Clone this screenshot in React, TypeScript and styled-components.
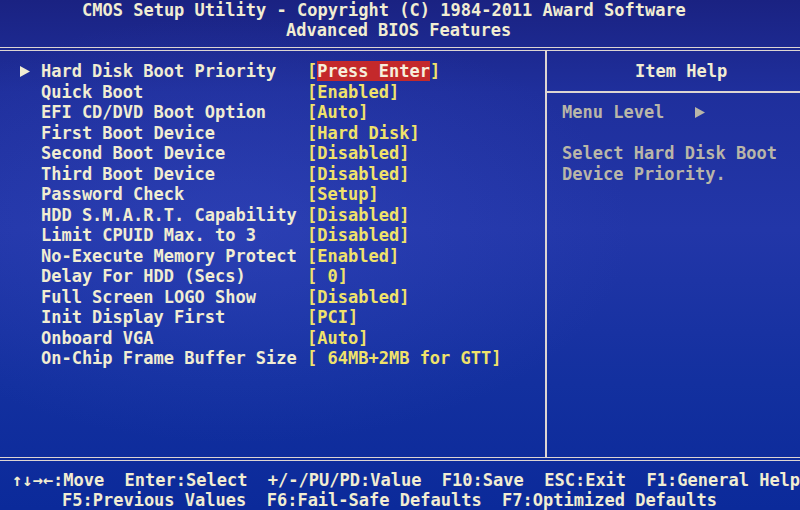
import React from "react";
import styled, { createGlobalStyle } from "styled-components";

const Global = createGlobalStyle`
  html, body { margin: 0; padding: 0; }
  body { width: 800px; height: 510px; overflow: hidden; background: #152896; }
`;

const Screen = styled.div`
  width: 800px;
  height: 510px;
  display: flex;
  flex-direction: column;
  overflow: hidden;
  background:
    radial-gradient(ellipse 70% 60% at 30% 45%, rgba(60, 80, 200, 0.35), rgba(60, 80, 200, 0) 70%),
    linear-gradient(180deg, #1a2282 0%, #1f2f9c 18%, #2236a8 45%, #13309f 75%, #0b2a9a 100%);
  font-family: "DejaVu Sans Mono", "Liberation Mono", monospace;
  font-size: 17px;
  font-weight: bold;
  line-height: 20.5px;
  color: #f1edd2;
  white-space: pre;
`;

const Header = styled.header`
  height: 47px;
  display: flex;
  flex-direction: column;
`;

const HeaderLine = styled.div<{ $indent: number }>`
  padding-left: ${(p) => p.$indent}px;
  line-height: 20px;
`;

const DoubleRule = styled.div`
  height: 2px;
  border-top: 1px solid #ddd5d2;
  border-bottom: 1px solid #ddd5d2;
`;

const Main = styled.main`
  flex: 1;
  display: grid;
  grid-template-columns: 547px 1fr;
  min-height: 0;
`;

const ItemList = styled.section`
  border-right: 2px solid #ddd5d2;
  padding: 10px 0 0 0;
  display: flex;
  flex-direction: column;
`;

const Row = styled.div`
  display: flex;
  align-items: center;
  height: 20.5px;
`;

const Marker = styled.span`
  width: 4ch;
  padding-left: 2ch;
  box-sizing: border-box;
  display: flex;
  align-items: center;
`;

const Label = styled.span`
  width: 26ch;
  color: #f1edd2;
`;

const Value = styled.span`
  color: #f0e26a;
`;

const Highlight = styled.span`
  background: #c4292b;
  color: #f6efdc;
  display: inline-block;
  line-height: 20px;
`;

const HelpPanel = styled.aside`
  display: flex;
  flex-direction: column;
`;

const HelpTitle = styled.div`
  height: 40px;
  line-height: 40px;
  padding-left: 88px;
  border-bottom: 2px solid #ddd5d2;
`;

const HelpBody = styled.div`
  padding: 9px 0 0 15px;
  color: #b9b6a8;
  display: flex;
  flex-direction: column;
`;

const HelpLine = styled.div`
  height: 20.5px;
  display: flex;
  align-items: center;
`;

const Footer = styled.footer`
  height: 49px;
  padding-top: 9px;
  box-sizing: border-box;
  display: flex;
  flex-direction: column;
`;

const FooterLine = styled.div<{ $indent: number }>`
  padding-left: ${(p) => p.$indent}px;
  line-height: 20px;
`;

const Triangle = ({ color }: { color: string }) => (
  <svg width="10" height="11" viewBox="0 0 10 11">
    <polygon points="0,0 10,5.5 0,11" fill={color} />
  </svg>
);

type Item = { label: string; value: string; selected?: boolean };

const items: Item[] = [
  { label: "Hard Disk Boot Priority", value: "Press Enter", selected: true },
  { label: "Quick Boot", value: "Enabled" },
  { label: "EFI CD/DVD Boot Option", value: "Auto" },
  { label: "First Boot Device", value: "Hard Disk" },
  { label: "Second Boot Device", value: "Disabled" },
  { label: "Third Boot Device", value: "Disabled" },
  { label: "Password Check", value: "Setup" },
  { label: "HDD S.M.A.R.T. Capability", value: "Disabled" },
  { label: "Limit CPUID Max. to 3", value: "Disabled" },
  { label: "No-Execute Memory Protect", value: "Enabled" },
  { label: "Delay For HDD (Secs)", value: " 0" },
  { label: "Full Screen LOGO Show", value: "Disabled" },
  { label: "Init Display First", value: "PCI" },
  { label: "Onboard VGA", value: "Auto" },
  { label: "On-Chip Frame Buffer Size", value: " 64MB+2MB for GTT" },
];

export default function App() {
  return (
    <>
      <Global />
      <Screen>
        <Header>
          <HeaderLine $indent={82}>CMOS Setup Utility - Copyright (C) 1984-2011 Award Software</HeaderLine>
          <HeaderLine $indent={286}>Advanced BIOS Features</HeaderLine>
        </Header>
        <DoubleRule />
        <Main>
          <ItemList>
            {items.map((it) => (
              <Row key={it.label}>
                <Marker>{it.selected && <Triangle color="#f1edd2" />}</Marker>
                <Label>{it.label}</Label>
                <Value>
                  [{it.selected ? <Highlight>{it.value}</Highlight> : it.value}]
                </Value>
              </Row>
            ))}
          </ItemList>
          <HelpPanel>
            <HelpTitle>Item Help</HelpTitle>
            <HelpBody>
              <HelpLine>
                {"Menu Level   "}
                <Triangle color="#b9b6a8" />
              </HelpLine>
              <HelpLine> </HelpLine>
              <HelpLine>Select Hard Disk Boot</HelpLine>
              <HelpLine>Device Priority.</HelpLine>
            </HelpBody>
          </HelpPanel>
        </Main>
        <DoubleRule />
        <Footer>
          <FooterLine $indent={12}>↑↓→←:Move  Enter:Select  +/-/PU/PD:Value  F10:Save  ESC:Exit  F1:General Help</FooterLine>
          <FooterLine $indent={62}>F5:Previous Values  F6:Fail-Safe Defaults  F7:Optimized Defaults</FooterLine>
        </Footer>
      </Screen>
    </>
  );
}
